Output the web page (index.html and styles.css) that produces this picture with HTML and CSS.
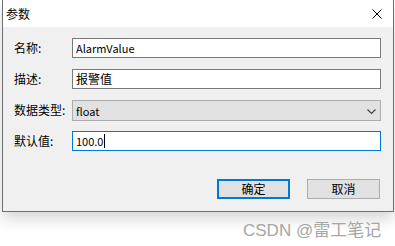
FILE: index.html
```html
<HTML>
<HEAD>
<TITLE>参数</TITLE>
<meta charset="utf-8">
<link rel="stylesheet" href="styles.css">
</HEAD>
<BODY>

<DIV CLASS="DIALOG">
  <DIV CLASS="TITLEBAR">
    <SPAN CLASS="TITLE">参数</SPAN>
    <SPAN CLASS="CLOSE"><svg width="10" height="10" viewBox="0 0 10 10"><path d="M0.5 0.5 L9.5 9.5 M9.5 0.5 L0.5 9.5" stroke="#000" stroke-width="1" fill="none"/></svg></SPAN>
  </DIV>
  <DIV CLASS="CLIENT">
    <DIV CLASS="FORM">
      <SPAN CLASS="LABEL">名称:</SPAN>
      <DIV CLASS="EDIT"><SPAN CLASS="LATIN">AlarmValue</SPAN></DIV>
      <SPAN CLASS="LABEL">描述:</SPAN>
      <DIV CLASS="EDIT">报警值</DIV>
      <SPAN CLASS="LABEL">数据类型:</SPAN>
      <DIV CLASS="COMBO"><SPAN CLASS="LATIN">float</SPAN>
        <svg class="ARROW" width="9" height="6" viewBox="0 0 9 6"><path d="M0.5 0.5 L4.5 4.5 L8.5 0.5" stroke="#404040" stroke-width="1.1" fill="none"/></svg>
      </DIV>
      <SPAN CLASS="LABEL">默认值:</SPAN>
      <DIV CLASS="EDIT FOCUS"><SPAN CLASS="LATIN">100.0</SPAN><SPAN CLASS="CARET"></SPAN></DIV>
    </DIV>
    <DIV CLASS="BUTTONS">
      <DIV CLASS="BUTTON DEFAULT">确定</DIV>
      <DIV CLASS="BUTTON">取消</DIV>
    </DIV>
  </DIV>
</DIV>

<DIV CLASS="WATERMARK">CSDN @雷工笔记</DIV>

</BODY>
</HTML>
```

FILE: styles.css
```css
body {margin: 0; background-color: #FFFFFF; font-family: "Noto Sans CJK SC", "Noto Sans", sans-serif; font-size: 12px; color: #000000;}
div.DIALOG {margin-left: 2px; width: 392px; box-sizing: border-box; border: 1px solid #6E6E6E; border-top: none; box-shadow: 0px 7px 14px rgba(0,0,0,0.16);}
div.TITLEBAR {height: 27px; background-color: #FFFFFF; display: flex; align-items: center; justify-content: space-between; padding: 0px 11px 0px 3px;}
span.TITLE {line-height: 14px; padding-top: 1px;}
span.CLOSE {display: flex; padding-top: 1px;}
div.CLIENT {height: 184px; box-sizing: border-box; background-color: #F0F0F0; padding: 11px 12px 0px 11px;}
div.FORM {display: grid; grid-template-columns: 58px 1fr; grid-template-rows: 20px 20px 20px 20px; row-gap: 11px; align-items: center;}
span.LABEL {line-height: 14px;}
div.EDIT {height: 20px; box-sizing: border-box; border: 1px solid #7A7A7A; background-color: #FFFFFF; padding-left: 3px; display: flex; align-items: center; line-height: 14px;}
div.EDIT.FOCUS {border-color: #0078D7;}
div.COMBO {height: 21px; box-sizing: border-box; border: 1px solid #ADADAD; background-color: #E1E1E1; padding: 1px 4px 0px 3px; display: flex; align-items: center; justify-content: space-between; align-self: start;}
span.LATIN {font-size: 11px; line-height: 14px;}
svg.ARROW {margin-right: 0px; margin-top: 1px;}
span.CARET {width: 1px; height: 14px; background-color: #000000; margin-left: 1px;}
div.BUTTONS {display: flex; justify-content: flex-end; gap: 17px; margin-top: 28px; padding-right: 1px;}
div.BUTTON {width: 73px; height: 20px; box-sizing: border-box; border: 1px solid #ADADAD; background-color: #E1E1E1; display: flex; align-items: center; justify-content: center; line-height: 14px;}
div.BUTTON.DEFAULT {border: 2px solid #0078D7;}
div.WATERMARK {position: absolute; left: 243px; top: 216px; font-family: "Liberation Sans", "Noto Sans CJK SC", sans-serif; font-size: 17px; color: #A6A6A6; letter-spacing: 0px;}
```
